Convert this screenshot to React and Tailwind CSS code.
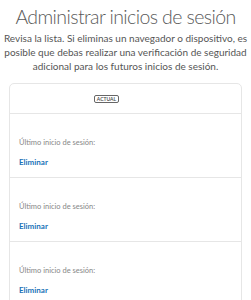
import React from "react";

const items = [1, 2, 3];

export default function App() {
  return (
    <div
      className="w-[251px] h-[300px] overflow-hidden bg-white text-[#555]"
      style={{ fontFamily: 'Lato, "Noto Sans", sans-serif' }}
    >
      <h1 className="pt-[4px] text-center text-[19.5px] leading-[26px] font-light tracking-[-0.6px] text-[#5a5a5a] whitespace-nowrap">
        Administrar inicios de sesión
      </h1>
      <p className="mt-[1px] px-[2px] text-center text-[10px] leading-[14px] font-normal text-[#555] whitespace-nowrap">
        Revisa la lista. Si eliminas un navegador o dispositivo, es
        <br />
        posible que debas realizar una verificación de seguridad
        <br />
        adicional para los futuros inicios de sesión.
      </p>

      <div className="mx-[9px] mt-[10px] rounded-[5px] border border-[#e6e6e6] bg-white">
        {/* header */}
        <div className="flex h-[30px] items-center justify-center border-b border-[#e6e6e6] pr-[38px]">
          <span className="rounded-[2px] border border-[#666] px-[2px] text-[5px] leading-[6px] font-semibold text-[#444]">
            ACTUAL
          </span>
        </div>

        {items.map((i) => (
          <div key={i} className="h-[64px] border-b border-[#e6e6e6] pl-[9px] pt-[24px]">
            <div className="text-[7.5px] leading-[10px] text-[#888]">Último inicio de sesión:</div>
            <div className="mt-[9px] text-[8px] leading-[10px] font-bold text-[#1a73b8]">Eliminar</div>
          </div>
        ))}
      </div>
    </div>
  );
}
